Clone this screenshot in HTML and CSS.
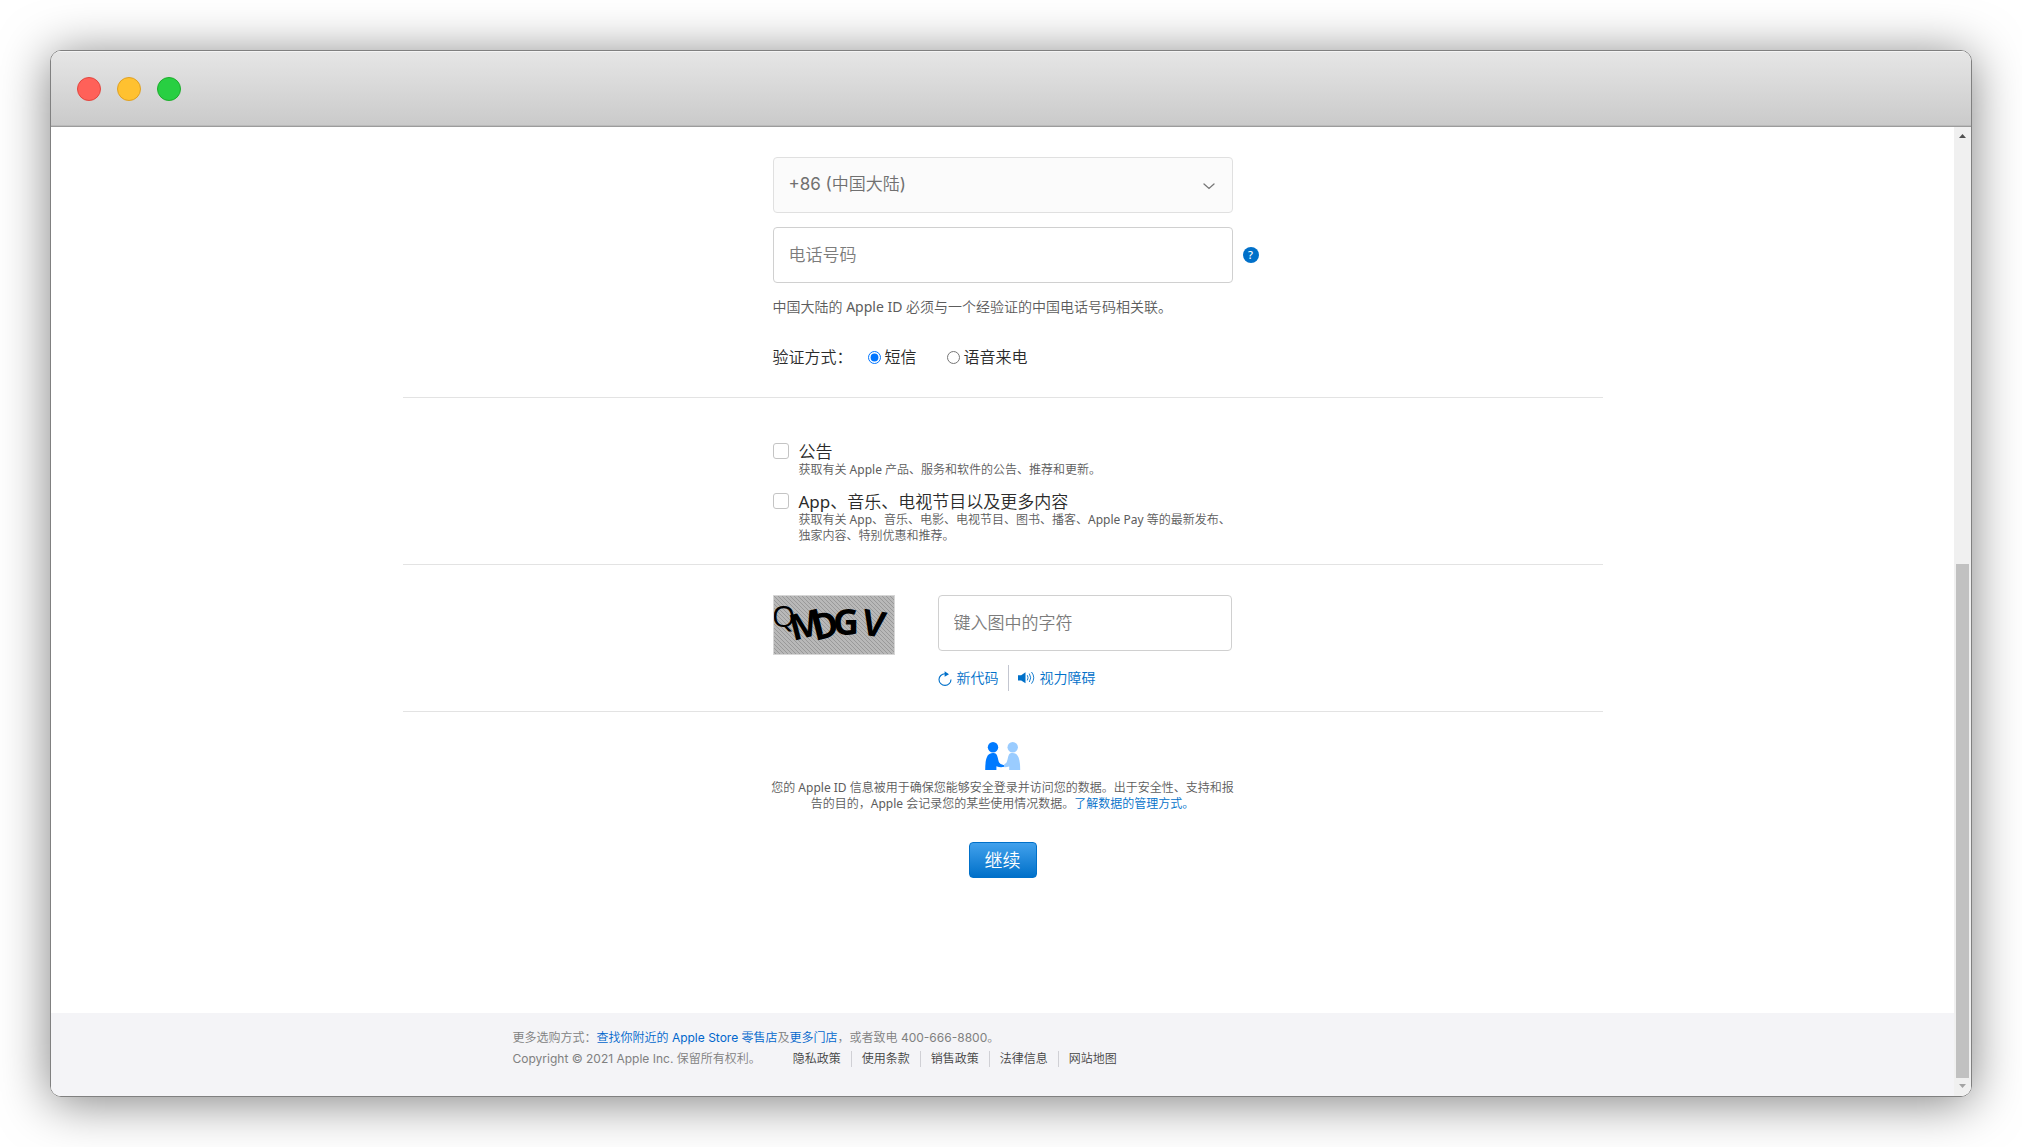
FILE: index.html
```html
<!DOCTYPE html>
<html lang="zh-CN">
<head>
<meta charset="utf-8">
<meta name="viewport" content="width=device-width, initial-scale=1">
<title>创建您的 Apple ID</title>
<link rel="stylesheet" href="styles.css">
</head>
<body>
<div class="window">
  <header class="titlebar">
    <span class="light light-close"></span>
    <span class="light light-minimize"></span>
    <span class="light light-zoom"></span>
  </header>
  <div class="viewport">
    <div class="page">
      <form class="form">
        <section class="section section-phone">
          <div class="column">
            <div class="select-wrap">
              <select class="field select" aria-label="国家或地区代码">
                <option>+86 (中国大陆)</option>
              </select>
              <svg class="chevron" width="12" height="7" viewBox="0 0 12 7" fill="none" stroke="#777" stroke-width="1.3" stroke-linecap="round"><path d="M1 1l5 4.5L11 1"/></svg>
            </div>
            <div class="phone-row">
              <input class="field" type="tel" placeholder="电话号码" aria-label="电话号码">
              <button class="help" type="button" aria-label="帮助">?</button>
            </div>
            <p class="hint">中国大陆的 Apple ID 必须与一个经验证的中国电话号码相关联。</p>
            <div class="methods" role="radiogroup" aria-labelledby="method-title">
              <span class="methods-title" id="method-title">验证方式：</span>
              <label class="method"><input class="radio" type="radio" name="method" checked>短信</label>
              <label class="method"><input class="radio" type="radio" name="method">语音来电</label>
            </div>
          </div>
        </section>

        <section class="section section-subscribe">
          <div class="column subscribe-list">
            <div class="subscribe">
              <input class="checkbox" type="checkbox" id="news">
              <div class="subscribe-text">
                <label class="subscribe-title" for="news">公告</label>
                <p class="small">获取有关 Apple 产品、服务和软件的公告、推荐和更新。</p>
              </div>
            </div>
            <div class="subscribe">
              <input class="checkbox" type="checkbox" id="apps">
              <div class="subscribe-text">
                <label class="subscribe-title" for="apps">App、音乐、电视节目以及更多内容</label>
                <p class="small">获取有关 App、音乐、电影、电视节目、图书、播客、Apple Pay 等的最新发布、<br>独家内容、特别优惠和推荐。</p>
              </div>
            </div>
          </div>
        </section>

        <section class="section section-captcha">
          <div class="column captcha-row">
            <svg class="captcha" width="122" height="60" viewBox="0 0 122 60" role="img" aria-label="验证码图像">
              <defs>
                <pattern id="weave" width="4" height="4" patternUnits="userSpaceOnUse">
                  <rect width="4" height="4" fill="#b8b8b8"/>
                  <path d="M-1 -1L5 5M-1 3L1 5M3 -1L5 1" stroke="#999" stroke-width="1"/>
                </pattern>
              </defs>
              <rect width="122" height="60" fill="url(#weave)"/>
              <g class="captcha-letters">
                <text class="captcha-thin" transform="translate(-1 32)">Q</text>
                <text transform="translate(20 46) rotate(-14)">M</text>
                <text transform="translate(42 46) rotate(-14)">D</text>
                <text transform="translate(60 40)">G</text>
                <text transform="translate(87 39) rotate(10)">V</text>
              </g>
              <rect x="0.5" y="0.5" width="121" height="59" fill="none" stroke="#d6d6d6"/>
            </svg>
            <div class="captcha-entry">
              <input class="field" type="text" placeholder="键入图中的字符" aria-label="键入图中的字符">
              <div class="captcha-links">
                <a class="captcha-link" href="#">
                  <svg width="14" height="16" viewBox="0 0 14 16" fill="none" stroke="#0070c9" stroke-width="1.1"><path d="M7 3.8A6 5.8 0 1 0 13 9.6"/><path d="M6.6 1.3L11 4.2L6.6 6.8Z" fill="#0070c9" stroke="none"/></svg>
                  新代码</a>
                <span class="separator"></span>
                <a class="captcha-link" href="#">
                  <svg width="17" height="14" viewBox="0 0 17 14" fill="none" stroke="#0070c9"><path d="M0 4.2H3.2L7.5 1.2V12.3L3.2 9.4H0Z" fill="#0070c9" stroke="none"/><path d="M9.3 4.2Q10.8 6.8 9.3 9.4M11.3 2.6Q14.1 6.8 11.3 11M13.5 1Q18 6.8 13.5 12.7" stroke-width="0.9"/></svg>
                  视力障碍</a>
              </div>
            </div>
          </div>
        </section>

        <section class="privacy">
          <svg class="people" width="36" height="28" viewBox="0 0 36 28"><g fill="#9accff"><circle cx="27.7" cy="5.2" r="5.2"/><path d="M24.2 28V24.6C21.5 25.2 19 25.5 17.2 24.6C18.8 24 19 22.2 20.3 21.6C22.8 20.8 22.4 15.5 24 12.6C24.7 11.4 25.8 11 27.7 11C33 11 35.2 16 35.2 28Z"/></g><g fill="#007aff"><circle cx="8" cy="5.2" r="5.2"/><path d="M.2 28C.2 16 2.4 11 7.8 11C11 11 12 12.4 12.7 15.5C13.8 20.5 14 22 19 23.2V24.8C16.5 25.5 14 25.2 11.4 24.3V28Z"/></g></svg>
          <p class="small">您的 Apple ID 信息被用于确保您能够安全登录并访问您的数据。出于安全性、支持和报<br>告的目的，Apple 会记录您的某些使用情况数据。<a class="link" href="#">了解数据的管理方式。</a></p>
          <button class="continue" type="submit">继续</button>
        </section>
      </form>

      <footer class="footer">
        <div class="footer-inner">
          <p class="footer-line">更多选购方式：<a class="footer-shop" href="#">查找你附近的 Apple Store 零售店</a>及<a class="footer-shop" href="#">更多门店</a>，或者致电 400-666-8800。</p>
          <div class="footer-line footer-legal">
            <p class="copyright">Copyright © 2021 Apple Inc. 保留所有权利。</p>
            <nav class="footer-nav">
              <a href="#">隐私政策</a>
              <a href="#">使用条款</a>
              <a href="#">销售政策</a>
              <a href="#">法律信息</a>
              <a href="#">网站地图</a>
            </nav>
          </div>
        </div>
      </footer>
    </div>
    <div class="scrollbar" aria-hidden="true">
      <svg class="arrow" width="7" height="4" viewBox="0 0 7 4"><path d="M3.5 0L7 4H0Z" fill="#505050"/></svg>
      <div class="track"><div class="thumb"></div></div>
      <svg class="arrow" width="7" height="4" viewBox="0 0 7 4"><path d="M0 0H7L3.5 4Z" fill="#a3a3a3"/></svg>
    </div>
  </div>
</div>
</body>
</html>
```
FILE: styles.css
```css
*,
*::before,
*::after {
  box-sizing: border-box;
}

body {
  margin: 0;
  padding: 50px;
  min-height: 100vh;
  display: flex;
  background: #fff;
  color: #2b2b2b;
  font-family: "Noto Sans", "Noto Sans CJK SC DemiLight", "Noto Sans CJK SC", sans-serif;
  font-weight: 400;
  font-size: 16px;
}

p {
  margin: 0;
}

a {
  text-decoration: none;
}

input,
select,
button {
  font: inherit;
}

/* Window frame */

.window {
  flex: 1;
  min-width: 0;
  display: flex;
  flex-direction: column;
  border: 1px solid #808080;
  border-radius: 11px;
  overflow: hidden;
  box-shadow: 0 5px 50px rgba(0, 0, 0, 0.5);
}

.titlebar {
  display: flex;
  gap: 16px;
  padding: 26px;
  height: 76px;
  background: linear-gradient(#e6e6e6, #cacaca);
  border-bottom: 1px solid #9c9c9c;
  box-shadow: inset 0 1px #f4f4f4, inset 0 -1px #bababa;
}

.light {
  width: 24px;
  height: 24px;
  border: 1px solid;
  border-radius: 50%;
}

.light-close {
  background: #ff6159;
  border-color: #e2463f;
}

.light-minimize {
  background: #ffc130;
  border-color: #dfa023;
}

.light-zoom {
  background: #28cf42;
  border-color: #1dad2b;
}

.viewport {
  flex: 1;
  display: flex;
  background: #fff;
}

.page {
  flex: 1;
  min-width: 0;
  display: flex;
  flex-direction: column;
}

/* Scroll bar */

.scrollbar {
  width: 17px;
  display: flex;
  flex-direction: column;
  align-items: center;
  justify-content: space-between;
  padding: 7px 0 8px;
  background: #f0f0f0;
}

.track {
  flex: 1;
  display: flex;
  flex-direction: column;
  justify-content: flex-end;
  margin: 6px 0;
}

.thumb {
  width: 13px;
  height: 55%;
  background: #c1c1c1;
}

/* Form */

.form {
  flex: 1;
  width: 100%;
  max-width: 1200px;
  margin: 0 auto;
}

.section {
  border-bottom: 1px solid #e3e3e3;
}

.section-phone {
  padding: 30px 0 27px;
}

.section-subscribe {
  padding: 44px 0 20px;
}

.section-captcha {
  padding: 30px 0 20px;
}

.column {
  width: 460px;
  margin: 0 auto;
}

.field {
  display: block;
  width: 100%;
  height: 56px;
  padding: 0 15px 1px;
  border: 1px solid #d0d0d0;
  border-radius: 4px;
  background: #fff;
  color: #333;
  font-size: 17px;
}

.field::placeholder {
  color: #7c7c7c;
  opacity: 1;
}

.select-wrap {
  position: relative;
  margin-bottom: 14px;
}

.select {
  appearance: none;
  padding-bottom: 2px;
  background: #fbfbfb;
  border-color: #e0e0e0;
  color: #707070;
  font-family: Inter, "Noto Sans CJK SC DemiLight", "Noto Sans CJK SC", sans-serif;
}

.chevron {
  position: absolute;
  right: 18px;
  top: 26px;
  pointer-events: none;
}

.phone-row {
  position: relative;
}

.help {
  position: absolute;
  left: calc(100% + 10px);
  top: 20px;
  width: 16px;
  height: 16px;
  padding: 0;
  border: 0;
  border-radius: 50%;
  background: #0070c9;
  color: #fff;
  font-size: 11px;
  font-weight: 500;
  line-height: 16px;
  text-align: center;
}

.hint {
  margin-top: 14px;
  color: #5c5c5c;
  font-size: 14px;
  line-height: 20px;
}

.methods {
  display: flex;
  align-items: center;
  margin-top: 27px;
  line-height: 26px;
}

.methods-title {
  width: 95px;
}

.method {
  display: flex;
  align-items: center;
  margin-right: 30px;
}

.radio {
  width: 13px;
  height: 13px;
  margin: 0 4px 0 0;
}

.subscribe-list {
  display: flex;
  flex-direction: column;
  gap: 14px;
}

.subscribe {
  display: flex;
  gap: 10px;
}

.checkbox {
  appearance: none;
  flex: none;
  width: 16px;
  height: 16px;
  margin: 1px 0 0;
  border: 1px solid #c4c4c4;
  border-radius: 3px;
  background: #fff;
}

.subscribe-text {
  white-space: nowrap;
}

.subscribe-title {
  display: block;
  font-size: 17px;
  line-height: 20px;
}

.small {
  color: #5c5c5c;
  font-size: 12px;
  line-height: 16px;
}

.captcha-row {
  display: flex;
  gap: 43px;
}

.captcha-letters {
  font-family: "Open Sans", "Noto Sans", sans-serif;
  font-weight: 700;
  font-size: 36px;
}

.captcha-thin {
  font-weight: 400;
  font-size: 30px;
}

.captcha-entry {
  width: 294px;
}

.captcha-links {
  display: flex;
  align-items: center;
  gap: 9px;
  margin-top: 14px;
  font-size: 14px;
}

.captcha-link {
  display: flex;
  align-items: center;
  gap: 5px;
  color: #0070c9;
  line-height: 26px;
}

.separator {
  width: 1px;
  height: 26px;
  background: #c3c6d0;
}

.privacy {
  display: flex;
  flex-direction: column;
  align-items: center;
  padding: 30px 0;
  text-align: center;
}

.people {
  margin-bottom: 10px;
}

.link {
  color: #0070c9;
}

.continue {
  width: 68px;
  height: 36px;
  margin-top: 30px;
  padding: 0;
  border: 1px solid #0070c9;
  border-radius: 4px;
  background: linear-gradient(#42a1ec, #0070c9);
  color: #fff;
  font-size: 18px;
  line-height: 32px;
}

/* Footer */

.footer {
  padding: 14px 0 27px;
  background: #f4f4f7;
  color: #808080;
  font-family: Inter, "Noto Sans CJK SC DemiLight", "Noto Sans CJK SC", sans-serif;
  font-size: 12px;
}

.footer-inner {
  width: 980px;
  margin: 0 auto;
}

.footer-line {
  line-height: 21px;
}

.footer-shop {
  color: #0066cc;
}

.footer-legal {
  display: flex;
  align-items: center;
  gap: 32px;
}

.footer-nav {
  display: flex;
  line-height: 16px;
}

.footer-nav a {
  padding-right: 10px;
  margin-right: 10px;
  border-right: 1px solid #d0d0d5;
  color: #444;
}

.footer-nav a:last-child {
  border-right: 0;
}
```
